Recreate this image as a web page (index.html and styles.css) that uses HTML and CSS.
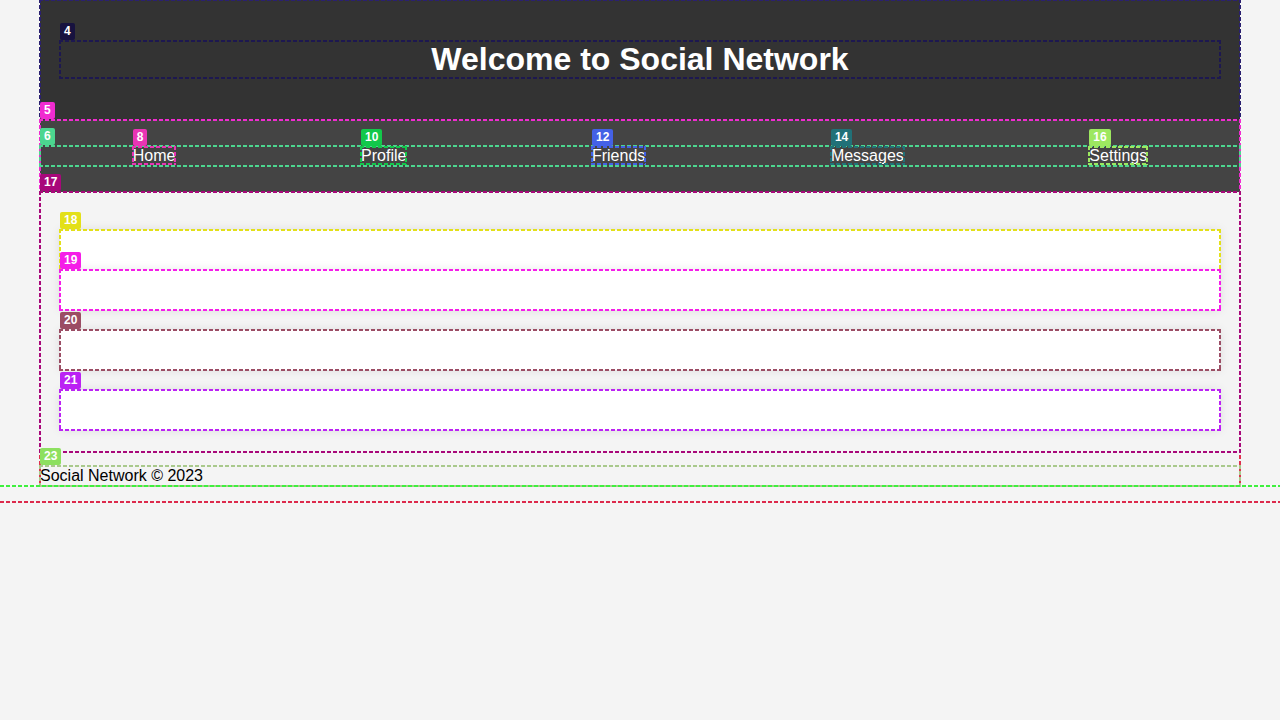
FILE: index.html
```html
<!DOCTYPE html>
<html lang="en" class="root-doc">
<head>
<meta charset="utf-8">
<title>Social Network</title>
<link rel="stylesheet" href="styles.css">
</head>
<body class="page">
  <div class="container dbg c-red">
    <header class="site-header dbg c-indigo">
      <h1 class="site-title dbg c-navy"><span class="tag tag-navy">4</span>Welcome to Social Network</h1>
    </header>
    <nav class="site-nav dbg c-pink"><span class="tag tag-pink">5</span>
      <ul class="nav-list dbg c-sea"><span class="tag tag-sea">6</span>
        <li class="nav-item"><a class="nav-link dbg c-rose" href="#"><span class="tag tag-rose">8</span>Home</a></li>
        <li class="nav-item"><a class="nav-link dbg c-green" href="#"><span class="tag tag-green">10</span>Profile</a></li>
        <li class="nav-item"><a class="nav-link dbg c-blue" href="#"><span class="tag tag-blue">12</span>Friends</a></li>
        <li class="nav-item"><a class="nav-link dbg c-teal" href="#"><span class="tag tag-teal">14</span>Messages</a></li>
        <li class="nav-item"><a class="nav-link dbg c-lime" href="#"><span class="tag tag-lime">16</span>Settings</a></li>
      </ul>
    </nav>
    <main class="content dbg c-plum"><span class="tag tag-plum">17</span>
      <section class="card card-first dbg c-yellow"><span class="tag tag-yellow">18</span></section>
      <section class="card dbg c-magenta"><span class="tag tag-magenta">19</span></section>
      <section class="card card-spaced dbg c-mauve"><span class="tag tag-mauve">20</span></section>
      <section class="card card-spaced dbg c-purple"><span class="tag tag-purple">21</span></section>
    </main>
    <footer class="site-footer dbg c-sage"><span class="tag tag-leaf">23</span>
      <p class="footer-text">Social Network © 2023</p>
    </footer>
  </div>
</body>
</html>
```
FILE: styles.css
```css
html.root-doc {
  position: relative;
}

/* page (html) frame: only its bottom edge is on screen */
html.root-doc::before {
  content: "";
  position: absolute;
  left: 0;
  right: 0;
  bottom: -1px;
  height: 2px;
  pointer-events: none;
  background: repeating-linear-gradient(to right, #dc2a4c 0 4px, transparent 4px 6px);
}

.page {
  margin: 0;
  background: #f4f4f4;
  font-family: "Liberation Sans", Arial, sans-serif;
  font-size: 16px;
  color: #000;
}

/* dashed debug frames */
.dbg {
  position: relative;
}

.dbg::before {
  content: "";
  position: absolute;
  inset: -1px;
  pointer-events: none;
  background:
    repeating-linear-gradient(to right, var(--c) 0 4px, transparent 4px 6px) left top / 100% 2px no-repeat,
    repeating-linear-gradient(to right, var(--c) 0 4px, transparent 4px 6px) left bottom / 100% 2px no-repeat,
    repeating-linear-gradient(to bottom, var(--c) 0 4px, transparent 4px 6px) left top / 2px 100% no-repeat,
    repeating-linear-gradient(to bottom, var(--c) 0 4px, transparent 4px 6px) right top / 2px 100% no-repeat;
}

.c-red { --c: #e0304e; }
.c-indigo { --c: #2a2070; }
.c-navy { --c: #1d1850; }
.c-pink { --c: #f02bd0; }
.c-sea { --c: #4cd68f; }
.c-rose { --c: #e934b4; }
.c-green { --c: #12c84a; }
.c-blue { --c: #4461e6; }
.c-teal { --c: #217178; }
.c-lime { --c: #9de860; }
.c-plum { --c: #a8087a; }
.c-yellow { --c: #e3e019; }
.c-magenta { --c: #f51de8; }
.c-mauve { --c: #9b4d64; }
.c-purple { --c: #bb22f4; }
.c-sage { --c: #a9c98c; }

/* debug tags */
.tag {
  position: absolute;
  left: 0;
  bottom: calc(100% + 1px);
  z-index: 1;
  font-family: "Liberation Sans", Arial, sans-serif;
  font-size: 12px;
  font-weight: bold;
  line-height: 15px;
  color: #fff;
  padding: 1px 4px;
  border-radius: 2px;
  white-space: nowrap;
  text-decoration: none;
  text-align: left;
}

.tag-navy { background: #17123f; }
.tag-pink { background: #f02bd0; }
.tag-sea { background: #4cd68f; }
.tag-rose { background: #e934b4; }
.tag-green { background: #12c84a; }
.tag-blue { background: #4461e6; }
.tag-teal { background: #217178; }
.tag-lime { background: #9de860; }
.tag-plum { background: #a8087a; }
.tag-yellow { background: #e3e019; }
.tag-magenta { background: #f51de8; }
.tag-mauve { background: #9b4d64; }
.tag-purple { background: #bb22f4; }
.tag-leaf { background: #8de060; }

/* layout */
.container {
  max-width: 1200px;
  margin: 0 auto;
}

.site-header {
  background: #333;
  padding: 20px;
}

.site-title {
  margin: 0.67em 0;
  font-size: 32px;
  font-weight: bold;
  color: #fff;
  text-align: center;
}

.site-nav {
  background: #444;
  padding: 10px 0;
}

.nav-list {
  list-style: none;
  margin: 16px 0;
  padding: 0;
  display: flex;
  justify-content: space-around;
}

.nav-item {
  list-style: none;
  line-height: 20px;
}

.nav-link {
  color: #fff;
  text-decoration: none;
}

.content {
  display: block;
  padding: 20px 20px 22px;
}

.card {
  background: #fff;
  padding: 20px;
  box-shadow: 0 0 10px rgba(0, 0, 0, 0.1);
}

.card-first {
  margin-top: 18px;
}

.card-spaced {
  margin-top: 20px;
}

.footer-text {
  margin: 14px 0 16px;
  line-height: 20px;
}

/* body frame: its bottom edge coincides with the footer's bottom, full viewport width */
.site-footer::after {
  content: "";
  position: absolute;
  left: calc(50% - 50vw);
  width: 100vw;
  bottom: -1px;
  height: 2px;
  z-index: 2;
  pointer-events: none;
  background: repeating-linear-gradient(to right, #3ef03e 0 4px, transparent 4px 6px);
}
```
